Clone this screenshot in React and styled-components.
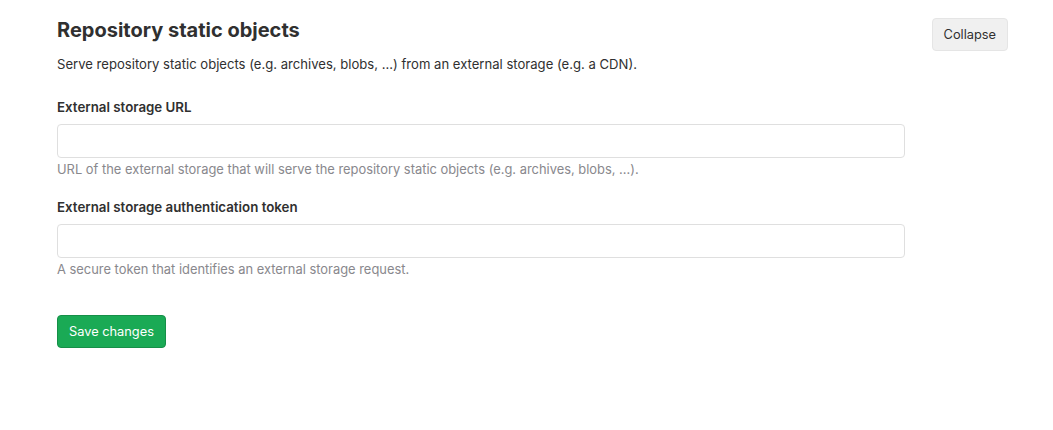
import React from 'react';
import styled, { createGlobalStyle } from 'styled-components';

const Global = createGlobalStyle`
  body {
    margin: 0;
    background: #fff;
    font-family: Inter, "Noto Sans", "Liberation Sans", sans-serif;
    color: #303030;
    font-size: 13px;
  }
`;

const Section = styled.section`
  padding: 18px 45px 0 57px;
`;

const Header = styled.div`
  display: flex;
  justify-content: space-between;
  align-items: flex-start;
`;

const Title = styled.h4`
  margin: 0;
  font-size: 20px;
  line-height: 24px;
  font-weight: 700;
  color: #303030;
`;

const Lead = styled.p`
  margin: 12px 0 0;
  font-size: 13.1px;
  line-height: 20px;
`;

const Button = styled.button`
  font-family: inherit;
  font-size: 12.8px;
  line-height: 19px;
  padding: 6px 11px;
  border-radius: 4px;
  cursor: pointer;
  background: ${p => (p.success ? '#1aaa55' : '#f0f0f0')};
  border: 1px solid ${p => (p.success ? '#168f48' : '#e5e5e5')};
  color: ${p => (p.success ? '#fff' : '#303030')};
`;

const Form = styled.form`
  width: 848px;
  margin-top: 23px;
`;

const Group = styled.div`
  margin-bottom: 17px;
`;

const Label = styled.label`
  display: block;
  font-size: 13.3px;
  font-weight: 600;
  line-height: 20px;
  margin-bottom: 7px;
`;

const Input = styled.input`
  display: block;
  box-sizing: border-box;
  width: 100%;
  height: 34px;
  border: 1px solid #dfdfdf;
  border-radius: 4px;
  padding: 6px 10px;
  font-family: inherit;
  font-size: 13px;
`;

const Help = styled.p`
  margin: 2px 0 0;
  font-size: 12.9px;
  line-height: 20px;
  color: #89888d;
`;

const Actions = styled.div`
  padding-top: 18px;
`;

export default function App() {
  return (
    <>
      <Global />
      <Section>
        <Header>
          <div>
            <Title>Repository static objects</Title>
            <Lead>
              Serve repository static objects (e.g. archives, blobs, ...) from an external storage (e.g. a CDN).
            </Lead>
          </div>
          <Button type="button">Collapse</Button>
        </Header>
        <Form onSubmit={e => e.preventDefault()}>
          <Group>
            <Label htmlFor="url">External storage URL</Label>
            <Input id="url" type="text" />
            <Help>URL of the external storage that will serve the repository static objects (e.g. archives, blobs, ...).</Help>
          </Group>
          <Group>
            <Label htmlFor="token">External storage authentication token</Label>
            <Input id="token" type="text" />
            <Help>A secure token that identifies an external storage request.</Help>
          </Group>
          <Actions>
            <Button success type="submit">Save changes</Button>
          </Actions>
        </Form>
      </Section>
    </>
  );
}
